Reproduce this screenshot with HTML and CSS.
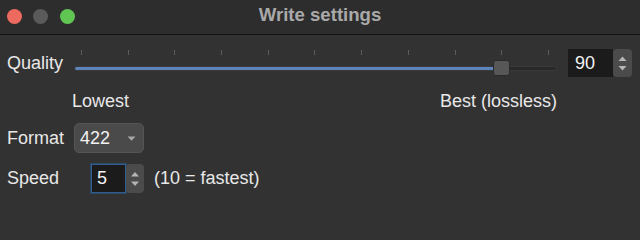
FILE: index.html
```html
<!DOCTYPE html>
<html>
<head>
<meta charset="utf-8">
<title>Write settings</title>
<link rel="stylesheet" href="styles.css">
</head>
<body>
<div class="window">
  <div class="titlebar">
    <div class="lights">
      <span class="light red"></span>
      <span class="light gray"></span>
      <span class="light green"></span>
    </div>
    <div class="title">Write settings</div>
    <div></div>
  </div>
  <div class="content">
    <div class="row quality-row">
      <span class="label label-quality">Quality</span>
      <div class="slider">
        <div class="ticks">
          <i></i><i></i><i></i><i></i><i></i><i></i><i></i><i></i><i></i><i></i><i></i>
        </div>
        <div class="track"><div class="fill" style="width:427px"></div></div>
        <div class="thumb" style="left:420px"></div>
      </div>
      <div class="spin spin-quality">
        <div class="field">90</div>
        <div class="stepper">
          <svg width="19" height="28" viewBox="0 0 19 28"><path d="M5.5 12 L9.5 7.5 L13.5 12 Z" fill="#b5b5b5"/><path d="M5.5 17 L13.5 17 L9.5 21.5 Z" fill="#b5b5b5"/></svg>
        </div>
      </div>
    </div>
    <div class="range">
      <span>Lowest</span>
      <span>Best (lossless)</span>
    </div>
    <div class="row format-row">
      <span class="label label-format">Format</span>
      <div class="popup">
        <span class="popup-value">422</span>
        <svg class="popup-arrow" width="9" height="5" viewBox="0 0 9 5"><path d="M0.5 0.5 L8.5 0.5 L4.5 4.8 Z" fill="#a8a8a8"/></svg>
      </div>
    </div>
    <div class="row speed-row">
      <span class="label label-speed">Speed</span>
      <div class="spin spin-speed">
        <div class="field focus">5</div>
        <div class="stepper">
          <svg width="18" height="29" viewBox="0 0 18 29"><path d="M5 12.5 L9 8 L13 12.5 Z" fill="#b5b5b5"/><path d="M5 17.5 L13 17.5 L9 22 Z" fill="#b5b5b5"/></svg>
        </div>
      </div>
      <span class="hint">(10 = fastest)</span>
    </div>
  </div>
</div>
</body>
</html>
```
FILE: styles.css
```css
* { box-sizing: border-box; }
html, body { margin: 0; padding: 0; }
body {
  width: 640px;
  height: 233px;
  overflow: hidden;
  background: #323232;
  font-family: "Liberation Sans", Arial, sans-serif;
  font-size: 18px;
  color: #e8e8e8;
}
.window { width: 640px; height: 233px; background: #323232; }

.titlebar {
  height: 35px;
  background: #2d2d2d;
  border-bottom: 1px solid #121212;
  display: grid;
  grid-template-columns: 1fr auto 1fr;
  align-items: start;
}
.lights { display: flex; padding-left: 7px; padding-top: 9px; }
.light { width: 15px; height: 15px; border-radius: 50%; display: block; }
.light.red { background: #ec6a5e; }
.light.gray { background: #5a5a5a; margin-left: 11px; }
.light.green { background: #61c554; margin-left: 12px; }
.title {
  margin-top: 5px;
  font-size: 18.6px;
  line-height: 20px;
  font-weight: bold;
  color: #a9a9a9;
}

.content { padding: 14px 8px 0 7px; }
.row { display: flex; align-items: center; }
.quality-row { height: 28px; }
.label-quality { width: 66px; }
.label-format { width: 67px; }
.label-speed { width: 84px; }

.slider { position: relative; width: 484px; height: 28px; }
.ticks {
  display: flex;
  justify-content: space-between;
  padding: 0 8px;
  margin-top: 1px;
  height: 5px;
}
.ticks i { display: block; width: 1px; height: 5px; background: #5c5c5c; }
.track {
  margin-top: 11px;
  margin-left: 1px;
  height: 5px;
  background: #282828;
  border: 1px solid #3a3a3a;
  border-radius: 3px;
  overflow: hidden;
}
.fill { height: 100%; background: #5b84bb; }
.thumb {
  position: absolute;
  top: 11px;
  width: 17px;
  height: 16px;
  border-radius: 3px;
  background: #575757;
  border: 1px solid #2a2a2a;
}

.spin { display: flex; }
.spin-quality { margin-left: 11px; height: 28px; }
.field {
  background: #1b1b1b;
  color: #f2f2f2;
  font-size: 18px;
}
.spin-quality .field { width: 45px; height: 28px; line-height: 28px; padding-left: 7px; }
.stepper { background: #4b4b4b; border-radius: 4px; display: flex; }
.spin-quality .stepper { width: 19px; height: 28px; }

.range {
  width: 550px;
  margin-top: 14px;
  padding-left: 65px;
  line-height: 20px;
  display: flex;
  justify-content: space-between;
}

.format-row { margin-top: 12px; height: 30px; }
.popup {
  width: 70px;
  height: 30px;
  background: #4a4a4a;
  border: 1px solid #555555;
  border-radius: 5px;
  display: flex;
  align-items: center;
  padding-left: 5px;
  font-size: 18px;
  color: #f2f2f2;
}
.popup-value { width: 47px; }
.popup-arrow { display: block; margin-top: 1px; }

.speed-row { margin-top: 11px; height: 29px; }
.spin-speed { height: 29px; }
.spin-speed .field {
  width: 35px;
  height: 29px;
  line-height: 27px;
  padding-left: 5px;
}
.field.focus { border: 1px solid #2f5d92; box-shadow: 0 0 0 1px rgba(47, 93, 146, 0.5); }
.spin-speed .stepper { width: 18px; height: 29px; }
.hint { margin-left: 10px; }
```
